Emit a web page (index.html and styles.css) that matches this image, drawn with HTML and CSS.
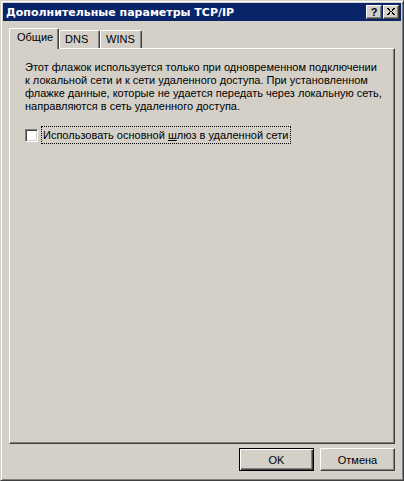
FILE: index.html
```html
<!DOCTYPE html>
<html lang="ru">
<head>
  <meta charset="UTF-8" />
  <title>Дополнительные параметры TCP/IP</title>
  <link rel="stylesheet" href="styles.css">
</head>
<body>
  <div class="window">
    <div class="titlebar">
      <span class="title">Дополнительные параметры TCP/IP</span>
      <div class="title-btns">
        <span class="tbtn help">?</span>
        <span class="tbtn close">
          <svg width="8" height="7" viewBox="0 0 8 7">
            <path d="M0 0h2v1h-2zM1 1h2v1h-2zM2 2h1v1h-1zM5 2h1v1h-1zM3 3h2v1h-2zM2 4h1v1h-1zM5 4h1v1h-1zM1 5h2v1h-2zM5 5h2v1h-2zM0 6h2v1h-2zM6 6h2v1h-2zM6 0h2v1h-2zM5 1h2v1h-2z" fill="#000"/>
          </svg>
        </span>
      </div>
    </div>

    <div class="dialog">
      <div class="tabs">
        <div class="tab active">Общие</div>
        <div class="tab dns">DNS</div>
        <div class="tab wins">WINS</div>
      </div>

      <div class="panel">
        <p class="info">
          Этот флажок используется только при одновременном подключении<br>
          к локальной сети и к сети удаленного доступа. При установленном<br>
          флажке данные, которые не удается передать через локальную сеть,<br>
          направляются в сеть удаленного доступа.
        </p>

        <div class="check-row">
          <span class="checkbox"></span>
          <span class="check-label">Использовать основной <u>ш</u>люз в удаленной сети</span>
        </div>
      </div>

      <div class="buttons">
        <button class="btn default">OK</button>
        <button class="btn">Отмена</button>
      </div>
    </div>
  </div>
</body>
</html>
```

FILE: styles.css
```css
body {
  margin: 0;
  font-family: 'Liberation Sans', Arial, sans-serif;
  font-size: 11px;
  background-color: #d4d0c8;
  color: #000;
}
.window {
  width: 404px;
  height: 481px;
  box-sizing: border-box;
  background-color: #d4d0c8;
  border-top: 1px solid #d4d0c8;
  border-left: 1px solid #d4d0c8;
  border-right: 1px solid #404040;
  border-bottom: 1px solid #404040;
  box-shadow: inset 1px 1px 0 #fff, inset -1px -1px 0 #808080;
  padding: 2px;
  display: flex;
  flex-direction: column;
}
.titlebar {
  height: 18px;
  background-color: #0a246a;
  display: flex;
  align-items: center;
  justify-content: space-between;
  padding: 0 2px 0 3px;
}
.title {
  color: #fff;
  font-family: 'DejaVu Sans', sans-serif;
  font-weight: bold;
  font-size: 11px;
  white-space: nowrap;
}
.title-btns {
  display: flex;
  gap: 1px;
}
.tbtn {
  width: 16px;
  height: 14px;
  box-sizing: border-box;
  background-color: #d4d0c8;
  border-top: 1px solid #fff;
  border-left: 1px solid #fff;
  border-right: 1px solid #404040;
  border-bottom: 1px solid #404040;
  box-shadow: inset -1px -1px 0 #808080;
  display: flex;
  align-items: center;
  justify-content: center;
  font-weight: bold;
  font-size: 11px;
  line-height: 12px;
}
.close svg {
  display: block;
  margin-top: -1px;
}
.dialog {
  flex: 1;
  display: flex;
  flex-direction: column;
  padding: 7px 6px 7px 6px;
}
.tabs {
  display: flex;
  align-items: flex-end;
  height: 20px;
  position: relative;
  z-index: 1;
}
.tab {
  box-sizing: border-box;
  height: 18px;
  background-color: #d4d0c8;
  border-top: 1px solid #fff;
  border-left: 1px solid #fff;
  border-right: 1px solid #404040;
  box-shadow: inset -1px 0 0 #808080;
  border-radius: 2px 2px 0 0;
  padding: 2px 0 0 5px;
  white-space: nowrap;
}
.tab.active {
  width: 50px;
  height: 21px;
  margin-bottom: -1px;
  padding: 2px 0 0 7px;
}
.tab.dns {
  width: 41px;
}
.tab.wins {
  width: 42px;
}
.panel {
  flex: 1;
  border-top: 1px solid #fff;
  border-left: 1px solid #fff;
  border-right: 1px solid #404040;
  border-bottom: 1px solid #404040;
  box-shadow: inset -1px -1px 0 #808080;
  padding: 12px 15px;
}
.info {
  margin: 0;
  line-height: 13px;
  white-space: nowrap;
}
.check-row {
  display: flex;
  align-items: center;
  margin-top: 13px;
}
.checkbox {
  width: 13px;
  height: 13px;
  box-sizing: border-box;
  background-color: #fff;
  border-top: 1px solid #808080;
  border-left: 1px solid #808080;
  border-right: 1px solid #fff;
  border-bottom: 1px solid #fff;
  box-shadow: inset 1px 1px 0 #404040, inset -1px -1px 0 #d4d0c8;
}
.check-label {
  margin-left: 3px;
  padding: 2px 1px;
  border: 1px dotted #000;
  white-space: nowrap;
}
.buttons {
  display: flex;
  justify-content: flex-end;
  gap: 6px;
  margin-top: 4px;
}
.btn {
  width: 75px;
  height: 23px;
  box-sizing: border-box;
  background-color: #d4d0c8;
  font-family: 'Liberation Sans', Arial, sans-serif;
  font-size: 11px;
  color: #000;
  border-top: 1px solid #fff;
  border-left: 1px solid #fff;
  border-right: 1px solid #404040;
  border-bottom: 1px solid #404040;
  box-shadow: inset -1px -1px 0 #808080;
  padding: 0;
  border-radius: 0;
}
.btn.default {
  border: 1px solid #000;
  box-shadow: inset 1px 1px 0 #fff, inset -1px -1px 0 #404040, inset -2px -2px 0 #808080;
}
```
